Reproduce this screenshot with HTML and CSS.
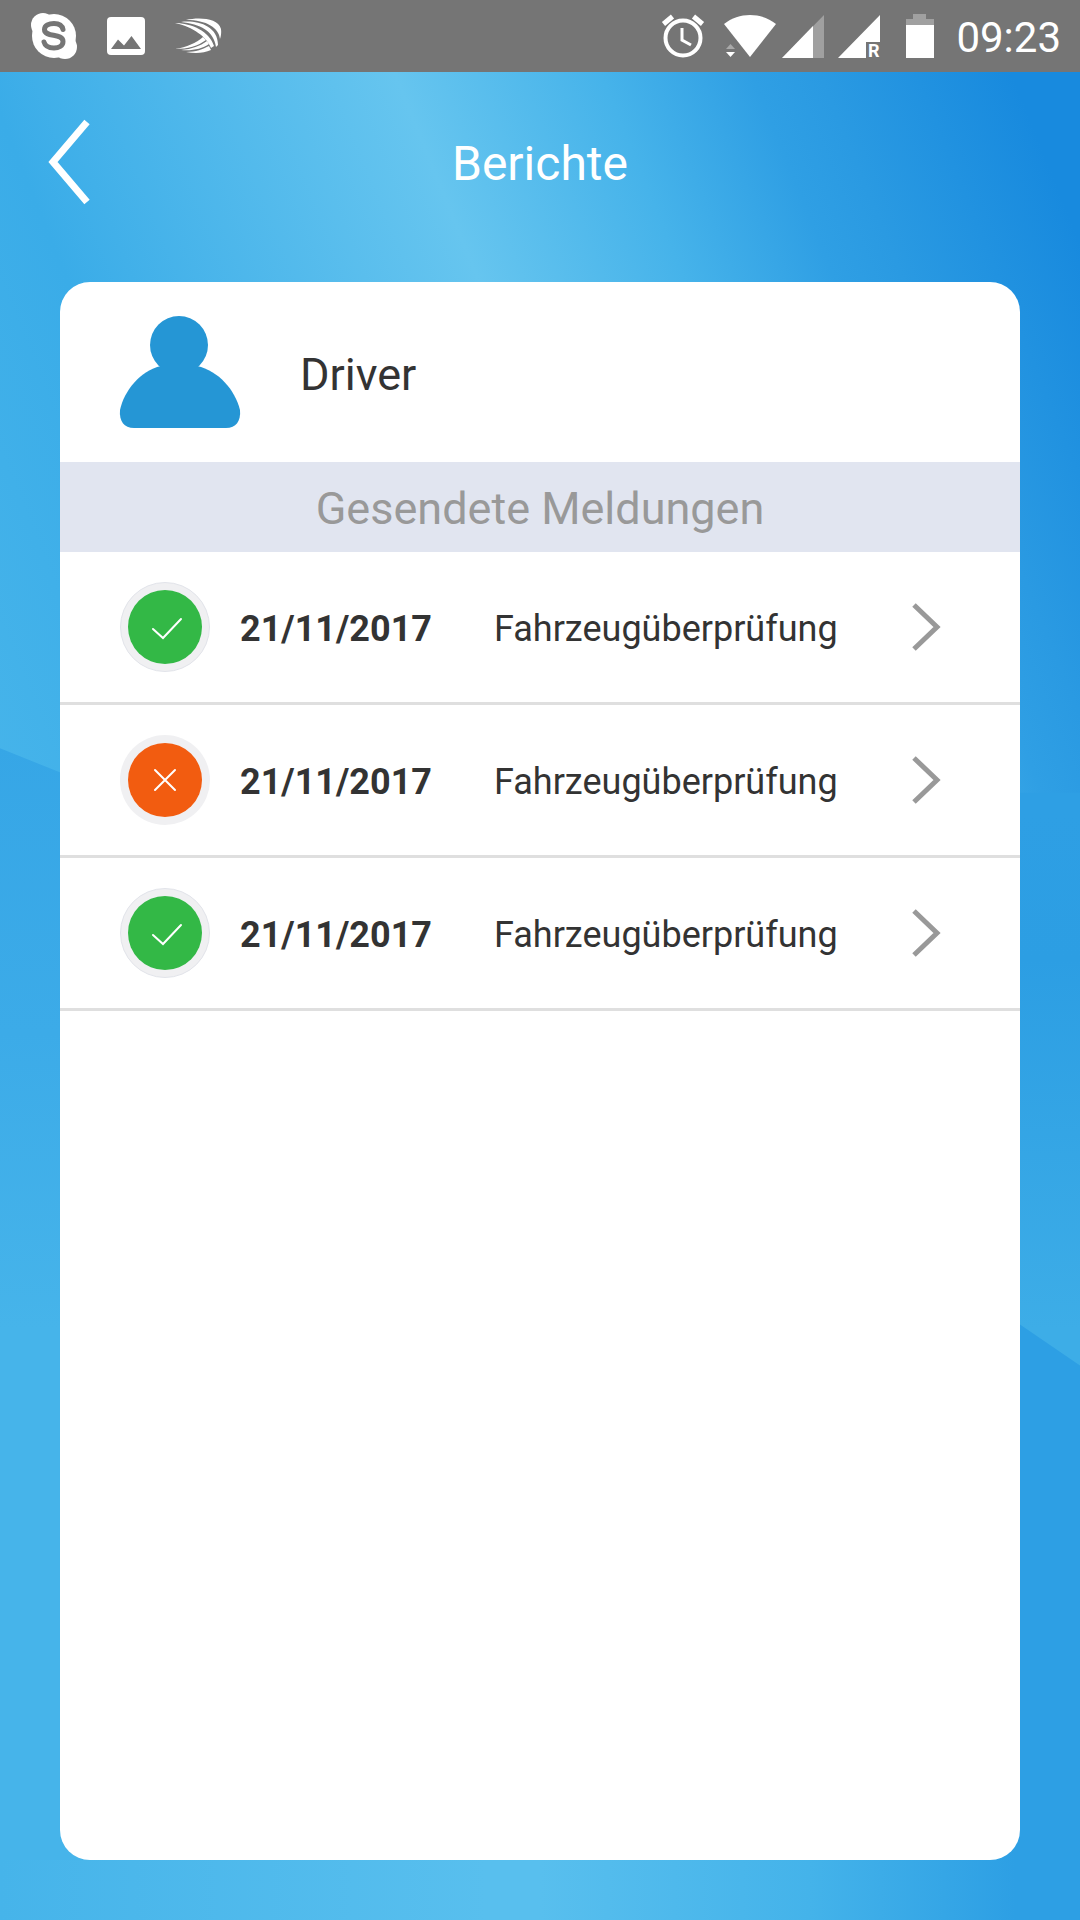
FILE: index.html
```html
<!DOCTYPE html>
<html lang="de">
<head>
    <meta charset="UTF-8">
    <meta name="viewport" content="width=device-width, initial-scale=1.0">
    <title>Berichte</title>
    <link rel="stylesheet" href="styles.css">
</head>
<body>
    <div class="status-bar">
        <div class="status-left">
            <svg class="icon-skype" viewBox="0 0 48 48">
                <circle cx="24" cy="24" r="22" fill="#fff"/>
                <circle cx="13" cy="13" r="12" fill="#fff"/>
                <circle cx="35" cy="35" r="12" fill="#fff"/>
                <path d="M33 17.500C32 12.500 28 11.500 24 11.500C19 11.500 14.500 13.500 14.500 17.500C14.500 26 33 20.500 33 29.500C33 34 28.500 36 24 36C18.500 36 15 34 14 30" fill="none" stroke="#757575" stroke-width="5" stroke-linecap="round"/>
            </svg>
            <svg class="icon-image" viewBox="0 0 38 38">
                <rect width="38" height="38" rx="4" fill="#fff"/>
                <path d="M4 32L11 22.500L17 28.500L24.500 19L34 32Z" fill="#757575"/>
            </svg>
            <svg class="icon-swift" viewBox="0 0 48 36" fill="#fff">
                <path d="M12 2C25-1 44 0 47 11C47.500 15 47 18 46 21C45 10 33 2 12 2Z"/>
                <path d="M7 4C22 2 44 7 44 27L42 29C40 13 26 6 7 4Z"/>
                <path d="M1 5C18 5 36 14 40 28L37 30C33 19 19 9 1 5Z"/>
                <path d="M1 31C13 29 22 25 29 19L32 22C24 28 14 31 1 31Z"/>
                <path d="M7 32C18 31 26 28 33 23L35 26C28 31 18 33 7 32Z"/>
                <path d="M12 34C22 34 29 31 35 28L37 32C30 35 22 36 12 34Z"/>
            </svg>
        </div>
        <div class="status-right">
            <svg class="icon-alarm" viewBox="0 0 42 44" fill="none" stroke="#fff">
                <circle cx="21" cy="24" r="17.500" stroke-width="4"/>
                <path d="M20 14V26L29 31" stroke-width="3"/>
                <path d="M1.500 10L10.500 2.500M40.500 10L31.500 2.500" stroke-width="5"/>
            </svg>
            <svg class="icon-wifi" viewBox="0 0 52 42">
                <path d="M0 9C15-3 37-3 52 9L26 42Z" fill="#fff"/>
                <path d="M2 34L6.500 29L11 34Z" fill="#a9a9a9"/>
                <path d="M2 37H11L6.500 42Z" fill="#fff"/>
            </svg>
            <svg class="icon-signal" viewBox="0 0 42 43">
                <path d="M0 43L42 0V43Z" fill="#a0a0a0"/>
                <path d="M0 43L31 11V43Z" fill="#fff"/>
            </svg>
            <svg class="icon-roaming" viewBox="0 0 42 43">
                <path d="M0 43L42 0V27H28V43Z" fill="#fff"/>
                <text class="roaming-text" x="30" y="42">R</text>
            </svg>
            <svg class="icon-battery" viewBox="0 0 28 44">
                <path d="M0 5H7V0H20V5H28V11H0Z" fill="#a0a0a0"/>
                <path d="M0 11H28V44H0Z" fill="#fff"/>
            </svg>
            <span class="clock">09:23</span>
        </div>
    </div>

    <div class="app">
        <header class="header">
            <button class="back-btn" type="button" aria-label="Zurück">
                <svg viewBox="0 0 42 86">
                    <path d="M39 3L5 43L39 83" fill="none" stroke="#fff" stroke-width="7"/>
                </svg>
            </button>
            <h1>Berichte</h1>
        </header>

        <main class="card">
            <div class="driver">
                <svg class="driver-icon" viewBox="0 0 120 112" fill="#2596d5">
                    <circle cx="59" cy="29" r="29"/>
                    <path d="M41 50C20 55 4 75 0 94C-1 105 4 112 14 112H106C116 112 121 105 120 94C115 74 99 55 77 50Z"/>
                </svg>
                <span class="driver-name">Driver</span>
            </div>
            <h2>Gesendete Meldungen</h2>
            <ul class="reports">
                <li>
                    <a class="report" href="#">
                        <span class="status ok">
                            <svg viewBox="0 0 74 74"><path d="M25 39L35 48L53 29"/></svg>
                        </span>
                        <span class="date">21/11/2017</span>
                        <span class="name">Fahrzeugüberprüfung</span>
                        <svg class="arrow" viewBox="0 0 28 48"><path d="M2 2L25 24L2 46"/></svg>
                    </a>
                </li>
                <li>
                    <a class="report" href="#">
                        <span class="status error">
                            <svg viewBox="0 0 74 74"><path d="M27 27L47 47M47 27L27 47"/></svg>
                        </span>
                        <span class="date">21/11/2017</span>
                        <span class="name">Fahrzeugüberprüfung</span>
                        <svg class="arrow" viewBox="0 0 28 48"><path d="M2 2L25 24L2 46"/></svg>
                    </a>
                </li>
                <li>
                    <a class="report" href="#">
                        <span class="status ok">
                            <svg viewBox="0 0 74 74"><path d="M25 39L35 48L53 29"/></svg>
                        </span>
                        <span class="date">21/11/2017</span>
                        <span class="name">Fahrzeugüberprüfung</span>
                        <svg class="arrow" viewBox="0 0 28 48"><path d="M2 2L25 24L2 46"/></svg>
                    </a>
                </li>
            </ul>
        </main>
    </div>
</body>
</html>
```
FILE: styles.css
```css
* {
    box-sizing: border-box;
}

body {
    font-family: Roboto, Arial, sans-serif;
    color: #333333;
    margin: 0;
    min-height: 100vh;
    display: flex;
    flex-direction: column;
}

svg {
    display: block;
    flex: none;
    overflow: visible;
}

/* Status bar */
.status-bar {
    height: 72px;
    background: #757575;
    color: #ffffff;
    display: flex;
    justify-content: space-between;
    align-items: center;
    padding: 0 19px 0 30px;
}

.status-left {
    display: flex;
    align-items: center;
    gap: 29px;
}

.status-right {
    display: flex;
    align-items: center;
    gap: 20px;
}

.icon-skype { width: 48px; }
.icon-image { width: 38px; }
.icon-swift { width: 48px; }
.icon-alarm { width: 42px; }
.icon-wifi { width: 52px; }
.icon-signal { width: 42px; margin-left: -14px; }
.icon-roaming { width: 42px; margin-left: -6px; }
.icon-battery { width: 28px; margin-left: 6px; }

.roaming-text {
    font-size: 18px;
    font-weight: bold;
    fill: #ffffff;
}

.clock {
    font-size: 42px;
    line-height: 48px;
    padding: 3px 0 0 2px;
}

/* Background with the two folds */
.app {
    flex: 1;
    display: flex;
    flex-direction: column;
    padding: 0 60px 60px;
    position: relative;
    z-index: 0;
    background:
        linear-gradient(68deg, #46b4ea 0%, #3aace8 20%, #66c5ef 50%, #46b3ea 65%, #2f9fe4 76%, #2a9ae2 81%, #188ade 95%) top / 100% 39% no-repeat,
        linear-gradient(#2e9fe4 40%, #2c9ee3 48%, #3dade7 68%);
}

.app::before, .app::after {
    content: "";
    position: absolute;
    inset: 0;
    z-index: -1;
}

.app::before {
    background:
        linear-gradient(90deg, #46b4ea, #58bfee 45%) bottom / 100% 60px no-repeat,
        linear-gradient(#36a6e6 36%, #3cabe8 52%, #46b4ea 68%);
    clip-path: polygon(0 36.6%, 6% 38%, 50% 47%, 50% 100%, 0 100%);
}

.app::after {
    background: linear-gradient(90deg, #58bfee 50%, #44b3ea 75%, #2d9fe4 94%);
    clip-path: polygon(50% 50%, 94% 67.6%, 100% 70%, 100% 100%, 50% 100%);
}

.header {
    height: 210px;
    display: grid;
    grid-template-columns: 1fr auto 1fr;
    align-items: start;
    padding-top: 47px;
}

.back-btn {
    width: 66px;
    margin-left: -24px;
    padding: 0 12px;
    border: none;
    background: none;
    cursor: pointer;
}

.header h1 {
    margin: 0;
    color: #ffffff;
    font-size: 48px;
    line-height: 90px;
    font-weight: normal;
}

/* Card */
.card {
    flex: 1;
    background: #ffffff;
    border-radius: 30px;
    overflow: hidden;
}

.driver {
    height: 180px;
    display: flex;
    align-items: center;
    gap: 60px;
    padding: 0 60px;
}

.driver-icon {
    width: 120px;
}

.driver-name {
    font-size: 45px;
    padding-top: 4px;
}

.card h2 {
    margin: 0;
    padding-top: 4px;
    background: #e1e5f0;
    color: #999999;
    font-size: 45px;
    line-height: 86px;
    font-weight: normal;
    text-align: center;
}

.reports {
    list-style: none;
    margin: 0;
    padding: 0;
}

.report {
    height: 153px;
    display: flex;
    align-items: center;
    padding: 0 80px 0 60px;
    border-bottom: 3px solid #dfdfdf;
    font-size: 36px;
    color: #333333;
    text-decoration: none;
}

.status {
    width: 90px;
    height: 90px;
    padding: 8px;
    border-radius: 50%;
    background: #f0f0f2;
    margin-right: 30px;
}

.status svg {
    border-radius: 50%;
    fill: none;
    stroke: #ffffff;
    stroke-width: 2;
    stroke-linecap: round;
}

.status.ok {
    border: 1px solid #e2e4ea;
    padding: 7px;
}

.ok svg {
    background: #33b846;
}

.error svg {
    background: #f25c10;
}

.date, .name {
    padding-top: 4px;
}

.date {
    font-weight: bold;
    margin-right: 62px;
}

.name {
    flex: 1;
}

.arrow {
    width: 28px;
    fill: none;
    stroke: #999999;
    stroke-width: 5;
}
```
